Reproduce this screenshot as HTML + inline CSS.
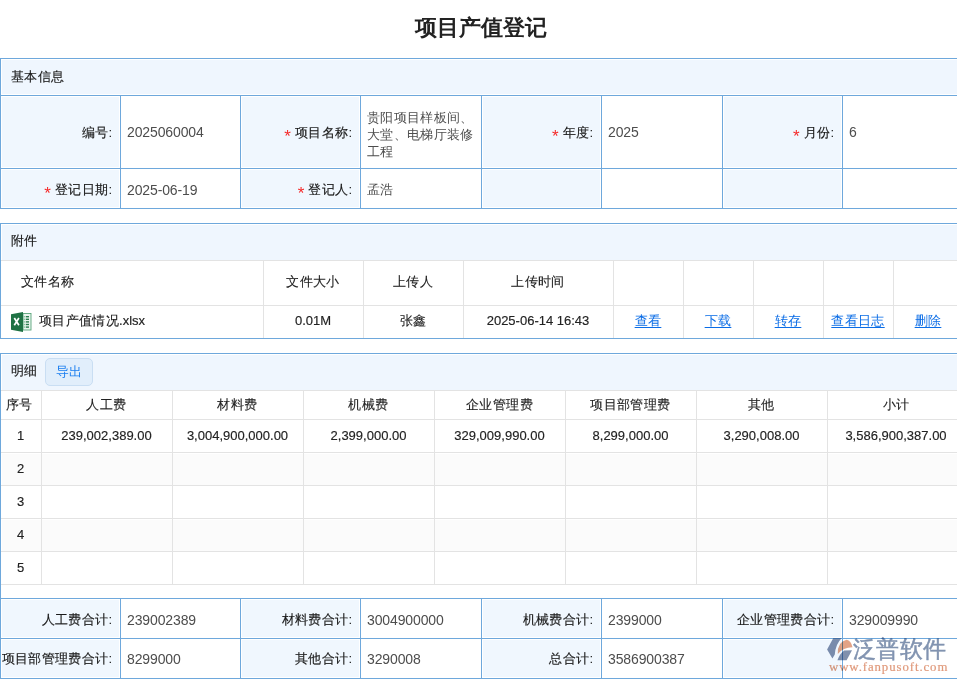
<!DOCTYPE html>
<html><head><meta charset="utf-8">
<style>
*{box-sizing:border-box}
html,body{margin:0;padding:0;width:957px;height:682px;overflow:hidden;background:#fff;font-family:"Liberation Sans",sans-serif;color:#333;position:relative}
.a{position:absolute}
.t{white-space:nowrap;line-height:16px}
.cj{color:#1a1a1a}
.cj .k{-webkit-text-stroke:0.15px #1a1a1a}
.cv{color:#4d4d4d}
.ar{color:#222;-webkit-text-stroke:0.15px #222}
.ar .k{-webkit-text-stroke:0.12px #262626}
.num{font-size:14px;color:#4d4d4d;letter-spacing:-0.12px}
.k{letter-spacing:0.35px}
.ttl .k{letter-spacing:0}
.req{color:#f52a2a;font-size:17px;margin-right:4px;position:relative;top:5px;line-height:0}
u{text-decoration:underline;text-underline-offset:2px}
</style></head><body>
<div class="a t ttl" style="left:0px;top:14px;width:962px;text-align:center;font-size:22px;color:#222;font-weight:bold;line-height:28px"><span class="k">项目产值登记</span></div>
<div class="a" style="left:2px;top:60px;width:962px;height:34px;background:#eff6fe;"></div>
<div class="a t cj" style="left:11px;top:69px;font-size:13px;"><span class="k">基本信息</span></div>
<div class="a" style="left:0px;top:58px;width:962px;height:1px;background:#6ea8dc;"></div>
<div class="a" style="left:0px;top:58px;width:1px;height:37px;background:#6ea8dc;"></div>
<div class="a" style="left:2px;top:97px;width:117px;height:70px;background:#f0f7fe;"></div>
<div class="a" style="left:242px;top:97px;width:117px;height:70px;background:#f0f7fe;"></div>
<div class="a" style="left:483px;top:97px;width:117px;height:70px;background:#f0f7fe;"></div>
<div class="a" style="left:724px;top:97px;width:117px;height:70px;background:#f0f7fe;"></div>
<div class="a" style="left:2px;top:170px;width:117px;height:37px;background:#f0f7fe;"></div>
<div class="a" style="left:242px;top:170px;width:117px;height:37px;background:#f0f7fe;"></div>
<div class="a" style="left:483px;top:170px;width:117px;height:37px;background:#f0f7fe;"></div>
<div class="a" style="left:724px;top:170px;width:117px;height:37px;background:#f0f7fe;"></div>
<div class="a" style="left:0px;top:95px;width:962px;height:1px;background:#6ea8dc;"></div>
<div class="a" style="left:0px;top:168px;width:962px;height:1px;background:#6ea8dc;"></div>
<div class="a" style="left:0px;top:208px;width:962px;height:1px;background:#6ea8dc;"></div>
<div class="a" style="left:120px;top:95px;width:1px;height:113px;background:#6ea8dc;"></div>
<div class="a" style="left:240px;top:95px;width:1px;height:113px;background:#6ea8dc;"></div>
<div class="a" style="left:360px;top:95px;width:1px;height:113px;background:#6ea8dc;"></div>
<div class="a" style="left:481px;top:95px;width:1px;height:113px;background:#6ea8dc;"></div>
<div class="a" style="left:601px;top:95px;width:1px;height:113px;background:#6ea8dc;"></div>
<div class="a" style="left:722px;top:95px;width:1px;height:113px;background:#6ea8dc;"></div>
<div class="a" style="left:842px;top:95px;width:1px;height:113px;background:#6ea8dc;"></div>
<div class="a" style="left:0px;top:95px;width:1px;height:113px;background:#6ea8dc;"></div>
<div class="a t cj" style="right:845px;top:125px;font-size:13px;text-align:right;"><span class="k">编号</span>:</div>
<div class="a t cv" style="left:127px;top:124px;font-size:13px;"><span class="num">2025060004</span></div>
<div class="a t cj" style="right:605px;top:125px;font-size:13px;text-align:right;"><span class="req">*</span><span class="k">项目名称</span>:</div>
<div class="a t cv" style="left:367px;top:109px;font-size:13px;line-height:17px"><span class="k">贵阳项目样板间、</span><br><span class="k">大堂、电梯厅装修</span><br><span class="k">工程</span></div>
<div class="a t cj" style="right:364px;top:125px;font-size:13px;text-align:right;"><span class="req">*</span><span class="k">年度</span>:</div>
<div class="a t cv" style="left:608px;top:124px;font-size:13px;"><span class="num">2025</span></div>
<div class="a t cj" style="right:123px;top:125px;font-size:13px;text-align:right;"><span class="req">*</span><span class="k">月份</span>:</div>
<div class="a t cv" style="left:849px;top:124px;font-size:13px;"><span class="num">6</span></div>
<div class="a t cj" style="right:845px;top:182px;font-size:13px;text-align:right;"><span class="req">*</span><span class="k">登记日期</span>:</div>
<div class="a t cv" style="left:127px;top:182px;font-size:13px;"><span class="num">2025-06-19</span></div>
<div class="a t cj" style="right:605px;top:182px;font-size:13px;text-align:right;"><span class="req">*</span><span class="k">登记人</span>:</div>
<div class="a t cv" style="left:367px;top:182px;font-size:13px;"><span class="k">孟浩</span></div>
<div class="a" style="left:0px;top:223px;width:962px;height:1px;background:#6ea8dc;"></div>
<div class="a" style="left:0px;top:338px;width:962px;height:1px;background:#6ea8dc;"></div>
<div class="a" style="left:0px;top:223px;width:1px;height:115px;background:#6ea8dc;"></div>
<div class="a" style="left:2px;top:225px;width:962px;height:35px;background:#eff6fe;"></div>
<div class="a t cj" style="left:11px;top:233px;font-size:13px;"><span class="k">附件</span></div>
<div class="a" style="left:1px;top:260px;width:962px;height:1px;background:#e3e3e3;"></div>
<div class="a" style="left:1px;top:305px;width:962px;height:1px;background:#e3e3e3;"></div>
<div class="a" style="left:263px;top:261px;width:1px;height:77px;background:#e3e3e3;"></div>
<div class="a" style="left:363px;top:261px;width:1px;height:77px;background:#e3e3e3;"></div>
<div class="a" style="left:463px;top:261px;width:1px;height:77px;background:#e3e3e3;"></div>
<div class="a" style="left:613px;top:261px;width:1px;height:77px;background:#e3e3e3;"></div>
<div class="a" style="left:683px;top:261px;width:1px;height:77px;background:#e3e3e3;"></div>
<div class="a" style="left:753px;top:261px;width:1px;height:77px;background:#e3e3e3;"></div>
<div class="a" style="left:823px;top:261px;width:1px;height:77px;background:#e3e3e3;"></div>
<div class="a" style="left:893px;top:261px;width:1px;height:77px;background:#e3e3e3;"></div>
<div class="a t ar" style="left:21px;top:274px;font-size:13px;"><span class="k">文件名称</span></div>
<div class="a t ar" style="left:263px;top:274px;width:100px;text-align:center;font-size:13px;"><span class="k">文件大小</span></div>
<div class="a t ar" style="left:363px;top:274px;width:100px;text-align:center;font-size:13px;"><span class="k">上传人</span></div>
<div class="a t ar" style="left:463px;top:274px;width:150px;text-align:center;font-size:13px;"><span class="k">上传时间</span></div>
<svg class="a" style="left:8px;top:308px" width="28" height="28" viewBox="0 0 28 28">
<rect x="15" y="5.5" width="8" height="16.5" fill="#eaf4ee" stroke="#5aa57a" stroke-width="0.9"/>
<g fill="#2b7d4f"><rect x="18" y="8" width="3" height="1.4"/><rect x="18" y="10.6" width="3" height="1.4"/><rect x="18" y="13.2" width="3" height="1.4"/><rect x="18" y="15.8" width="3" height="1.4"/><rect x="18" y="18.4" width="3" height="1.4"/></g>
<g fill="#8cc3a2"><rect x="15.5" y="8" width="2" height="1.4"/><rect x="15.5" y="10.6" width="2" height="1.4"/><rect x="15.5" y="13.2" width="2" height="1.4"/><rect x="15.5" y="15.8" width="2" height="1.4"/><rect x="15.5" y="18.4" width="2" height="1.4"/></g>
<path d="M3 6.2 L15 4 L15 24 L3 21.8 Z" fill="#1f7244"/>
<path d="M6.3 10 L10.9 17.3 M10.9 10 L6.3 17.3" stroke="#fff" stroke-width="1.7" fill="none"/>
</svg>
<div class="a t ar" style="left:39px;top:313px;font-size:13px;"><span class="k">项目产值情况</span>.xlsx</div>
<div class="a t ar" style="left:263px;top:313px;width:100px;text-align:center;font-size:13px;">0.01M</div>
<div class="a t ar" style="left:363px;top:313px;width:100px;text-align:center;font-size:13px;"><span class="k">张鑫</span></div>
<div class="a t ar" style="left:463px;top:313px;width:150px;text-align:center;font-size:13px;">2025-06-14 16:43</div>
<div class="a t lk" style="left:613px;top:313px;width:70px;text-align:center;font-size:13px;color:#0a6ce6;"><u><span class="k">查看</span></u></div>
<div class="a t lk" style="left:683px;top:313px;width:70px;text-align:center;font-size:13px;color:#0a6ce6;"><u><span class="k">下载</span></u></div>
<div class="a t lk" style="left:753px;top:313px;width:70px;text-align:center;font-size:13px;color:#0a6ce6;"><u><span class="k">转存</span></u></div>
<div class="a t lk" style="left:823px;top:313px;width:70px;text-align:center;font-size:13px;color:#0a6ce6;"><u><span class="k">查看日志</span></u></div>
<div class="a t lk" style="left:893px;top:313px;width:70px;text-align:center;font-size:13px;color:#0a6ce6;"><u><span class="k">删除</span></u></div>
<div class="a" style="left:0px;top:353px;width:962px;height:1px;background:#6ea8dc;"></div>
<div class="a" style="left:0px;top:678px;width:962px;height:1px;background:#6ea8dc;"></div>
<div class="a" style="left:0px;top:353px;width:1px;height:325px;background:#6ea8dc;"></div>
<div class="a" style="left:2px;top:355px;width:962px;height:35px;background:#eff6fe;"></div>
<div class="a t cj" style="left:11px;top:363px;font-size:13px;"><span class="k">明细</span></div>
<div class="a" style="left:45px;top:358px;width:48px;height:28px;background:#e1eefb;border:1px solid #c9def3;border-radius:5px"></div>
<div class="a t bt" style="left:56px;top:364px;font-size:13px;color:#1c7ff0;"><span class="k">导出</span></div>
<div class="a" style="left:1px;top:390px;width:962px;height:1px;background:#e3e3e3;"></div>
<div class="a" style="left:2px;top:454px;width:962px;height:31px;background:#fbfbfb;"></div>
<div class="a" style="left:2px;top:520px;width:962px;height:31px;background:#fbfbfb;"></div>
<div class="a" style="left:1px;top:419px;width:962px;height:1px;background:#e3e3e3;"></div>
<div class="a" style="left:1px;top:452px;width:962px;height:1px;background:#e3e3e3;"></div>
<div class="a" style="left:1px;top:485px;width:962px;height:1px;background:#e3e3e3;"></div>
<div class="a" style="left:1px;top:518px;width:962px;height:1px;background:#e3e3e3;"></div>
<div class="a" style="left:1px;top:551px;width:962px;height:1px;background:#e3e3e3;"></div>
<div class="a" style="left:1px;top:584px;width:962px;height:1px;background:#e3e3e3;"></div>
<div class="a" style="left:41px;top:391px;width:1px;height:193px;background:#e3e3e3;"></div>
<div class="a" style="left:172px;top:391px;width:1px;height:193px;background:#e3e3e3;"></div>
<div class="a" style="left:303px;top:391px;width:1px;height:193px;background:#e3e3e3;"></div>
<div class="a" style="left:434px;top:391px;width:1px;height:193px;background:#e3e3e3;"></div>
<div class="a" style="left:565px;top:391px;width:1px;height:193px;background:#e3e3e3;"></div>
<div class="a" style="left:696px;top:391px;width:1px;height:193px;background:#e3e3e3;"></div>
<div class="a" style="left:827px;top:391px;width:1px;height:193px;background:#e3e3e3;"></div>
<div class="a t ar" style="left:-1px;top:397px;width:41px;text-align:center;font-size:13px;"><span class="k">序号</span></div>
<div class="a t ar" style="left:41px;top:397px;width:131px;text-align:center;font-size:13px;"><span class="k">人工费</span></div>
<div class="a t ar" style="left:172px;top:397px;width:131px;text-align:center;font-size:13px;"><span class="k">材料费</span></div>
<div class="a t ar" style="left:303px;top:397px;width:131px;text-align:center;font-size:13px;"><span class="k">机械费</span></div>
<div class="a t ar" style="left:434px;top:397px;width:131px;text-align:center;font-size:13px;"><span class="k">企业管理费</span></div>
<div class="a t ar" style="left:565px;top:397px;width:131px;text-align:center;font-size:13px;"><span class="k">项目部管理费</span></div>
<div class="a t ar" style="left:696px;top:397px;width:131px;text-align:center;font-size:13px;"><span class="k">其他</span></div>
<div class="a t ar" style="left:827px;top:397px;width:138px;text-align:center;font-size:13px;"><span class="k">小计</span></div>
<div class="a t ar" style="left:0px;top:428px;width:41px;text-align:center;font-size:13px;">1</div>
<div class="a t ar" style="left:41px;top:428px;width:131px;text-align:center;font-size:13px;">239,002,389.00</div>
<div class="a t ar" style="left:172px;top:428px;width:131px;text-align:center;font-size:13px;">3,004,900,000.00</div>
<div class="a t ar" style="left:303px;top:428px;width:131px;text-align:center;font-size:13px;">2,399,000.00</div>
<div class="a t ar" style="left:434px;top:428px;width:131px;text-align:center;font-size:13px;">329,009,990.00</div>
<div class="a t ar" style="left:565px;top:428px;width:131px;text-align:center;font-size:13px;">8,299,000.00</div>
<div class="a t ar" style="left:696px;top:428px;width:131px;text-align:center;font-size:13px;">3,290,008.00</div>
<div class="a t ar" style="left:827px;top:428px;width:138px;text-align:center;font-size:13px;">3,586,900,387.00</div>
<div class="a t ar" style="left:0px;top:461px;width:41px;text-align:center;font-size:13px;">2</div>
<div class="a t ar" style="left:0px;top:494px;width:41px;text-align:center;font-size:13px;">3</div>
<div class="a t ar" style="left:0px;top:527px;width:41px;text-align:center;font-size:13px;">4</div>
<div class="a t ar" style="left:0px;top:560px;width:41px;text-align:center;font-size:13px;">5</div>
<div class="a" style="left:2px;top:600px;width:117px;height:37px;background:#f0f7fe;"></div>
<div class="a" style="left:242px;top:600px;width:117px;height:37px;background:#f0f7fe;"></div>
<div class="a" style="left:483px;top:600px;width:117px;height:37px;background:#f0f7fe;"></div>
<div class="a" style="left:724px;top:600px;width:117px;height:37px;background:#f0f7fe;"></div>
<div class="a" style="left:2px;top:640px;width:117px;height:37px;background:#f0f7fe;"></div>
<div class="a" style="left:242px;top:640px;width:117px;height:37px;background:#f0f7fe;"></div>
<div class="a" style="left:483px;top:640px;width:117px;height:37px;background:#f0f7fe;"></div>
<div class="a" style="left:724px;top:640px;width:117px;height:37px;background:#f0f7fe;"></div>
<div class="a" style="left:0px;top:598px;width:962px;height:1px;background:#6ea8dc;"></div>
<div class="a" style="left:0px;top:638px;width:962px;height:1px;background:#6ea8dc;"></div>
<div class="a" style="left:0px;top:678px;width:962px;height:1px;background:#6ea8dc;"></div>
<div class="a" style="left:120px;top:598px;width:1px;height:80px;background:#6ea8dc;"></div>
<div class="a" style="left:240px;top:598px;width:1px;height:80px;background:#6ea8dc;"></div>
<div class="a" style="left:360px;top:598px;width:1px;height:80px;background:#6ea8dc;"></div>
<div class="a" style="left:481px;top:598px;width:1px;height:80px;background:#6ea8dc;"></div>
<div class="a" style="left:601px;top:598px;width:1px;height:80px;background:#6ea8dc;"></div>
<div class="a" style="left:722px;top:598px;width:1px;height:80px;background:#6ea8dc;"></div>
<div class="a" style="left:842px;top:598px;width:1px;height:80px;background:#6ea8dc;"></div>
<div class="a" style="left:0px;top:598px;width:1px;height:80px;background:#6ea8dc;"></div>
<div class="a t cj" style="right:845px;top:612px;font-size:13px;text-align:right;"><span class="k">人工费合计</span>:</div>
<div class="a t cv" style="left:127px;top:612px;font-size:13px;"><span class="num">239002389</span></div>
<div class="a t cj" style="right:605px;top:612px;font-size:13px;text-align:right;"><span class="k">材料费合计</span>:</div>
<div class="a t cv" style="left:367px;top:612px;font-size:13px;"><span class="num">3004900000</span></div>
<div class="a t cj" style="right:364px;top:612px;font-size:13px;text-align:right;"><span class="k">机械费合计</span>:</div>
<div class="a t cv" style="left:608px;top:612px;font-size:13px;"><span class="num">2399000</span></div>
<div class="a t cj" style="right:123px;top:612px;font-size:13px;text-align:right;"><span class="k">企业管理费合计</span>:</div>
<div class="a t cv" style="left:849px;top:612px;font-size:13px;"><span class="num">329009990</span></div>
<div class="a t cj" style="right:845px;top:651px;font-size:13px;text-align:right;"><span class="k">项目部管理费合计</span>:</div>
<div class="a t cv" style="left:127px;top:651px;font-size:13px;"><span class="num">8299000</span></div>
<div class="a t cj" style="right:605px;top:651px;font-size:13px;text-align:right;"><span class="k">其他合计</span>:</div>
<div class="a t cv" style="left:367px;top:651px;font-size:13px;"><span class="num">3290008</span></div>
<div class="a t cj" style="right:364px;top:651px;font-size:13px;text-align:right;"><span class="k">总合计</span>:</div>
<div class="a t cv" style="left:608px;top:651px;font-size:13px;"><span class="num">3586900387</span></div>
<svg class="a" style="left:824px;top:636px;mix-blend-mode:multiply" width="133" height="46" viewBox="0 0 133 46">
<path d="M3.1 13.4 L9.2 2.3 L17.6 2.3 Q11.6 8 10.8 18.6 L8.4 22.6 Z" fill="#8090ad"/>
<path d="M13.8 18 Q13.2 6 22.6 3.8 Q27 4.5 28.5 11.3 Q19 11.5 13.8 18 Z" fill="#e3a386"/>
<path d="M13.4 24.3 L22.6 24.3 L28 14.2 L20 14.4 Q15.5 18 13.4 24.3 Z" fill="#8090ad"/>
</svg>
<div class="a" style="left:853px;top:634px;font-size:23px;line-height:30px;color:#8193b0;white-space:nowrap;letter-spacing:0.4px;-webkit-text-stroke:0.5px #8193b0;mix-blend-mode:multiply">泛普软件</div>
<div class="a" style="left:829px;top:660px;font-family:'Liberation Serif',serif;font-size:12.8px;line-height:14px;color:#e09a7c;white-space:nowrap;letter-spacing:0.92px;-webkit-text-stroke:0.2px #e09a7c;mix-blend-mode:multiply">www.fanpusoft.com</div>
</body></html>
